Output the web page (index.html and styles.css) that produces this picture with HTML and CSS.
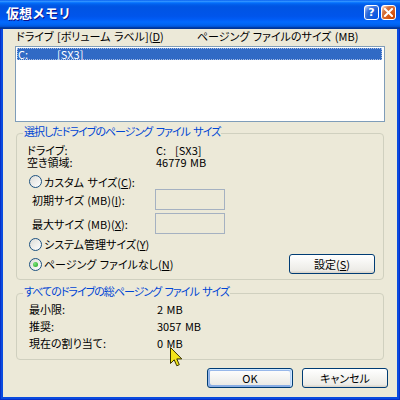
FILE: index.html
```html
<!DOCTYPE html>
<html lang="ja">
<head>
<meta charset="utf-8">
<title>仮想メモリ</title>
<link rel="stylesheet" href="styles.css">
</head>
<body>
<div class="window">
  <div class="titlebar">
    <span class="title">仮想メモリ</span>
    <span class="tbtn help">?</span>
    <span class="tbtn close"><svg width="9" height="9" viewBox="0 0 9 9"><path d="M1 1 L8 8 M8 1 L1 8" stroke="#fff" stroke-width="2" stroke-linecap="square"/></svg></span>
  </div>
  <div class="client">
    <div class="list-head"><span class="col1">ドライブ [ボリューム ラベル](<u>D</u>)</span><span>ページング ファイルのサイズ (MB)</span></div>
    <div class="listbox">
      <div class="item"><span class="c1">C:</span><span>[SX3]</span></div>
    </div>
    <div class="group g1">
      <div class="group-title">選択したドライブのページング ファイル サイズ</div>
      <div class="info"><span class="lbl">ドライブ:<br>空き領域:</span><span class="val">C:<span class="vol">[SX3]</span><br>46779 MB</span></div>
      <div class="radio-row custom"><span class="radio"></span><span>カスタム サイズ(<u>C</u>):</span></div>
      <div class="field"><span class="flbl">初期サイズ (MB)(<u>I</u>):</span><span class="edit"></span></div>
      <div class="field f2"><span class="flbl">最大サイズ (MB)(<u>X</u>):</span><span class="edit"></span></div>
      <div class="radio-row sys"><span class="radio"></span><span>システム管理サイズ(<u>Y</u>)</span></div>
      <div class="radio-row last"><span class="radio checked"></span><span>ページング ファイルなし(<u>N</u>)</span><button class="btn set">設定(<u>S</u>)</button></div>
    </div>
    <div class="group g2">
      <div class="group-title">すべてのドライブの総ページング ファイル サイズ</div>
      <div class="sum first"><span class="lbl">最小限:</span><span>2 MB</span></div>
      <div class="sum"><span class="lbl">推奨:</span><span>3057 MB</span></div>
      <div class="sum"><span class="lbl">現在の割り当て:</span><span>0 MB</span></div>
    </div>
    <div class="buttons"><button class="btn default">OK</button><button class="btn">キャンセル</button></div>
  </div>
  <svg class="cursor" width="13" height="20" viewBox="0 0 13 20"><path d="M0.5 0.5 V16.5 L4.2 12.8 L6.8 18.8 L9.3 17.7 L6.8 11.9 H11.8 Z" fill="#F4E41A" stroke="#3A3500" stroke-width="1" stroke-linejoin="miter"/></svg>
</div>
</body>
</html>
```

FILE: styles.css
```css
* { box-sizing: border-box; }
html, body { margin: 0; padding: 0; }
body {
  width: 400px;
  height: 400px;
  overflow: hidden;
  background: #0847E0;
  font-family: "Noto Sans CJK JP", "Liberation Sans", sans-serif;
  font-size: 11px;
  color: #000;
  font-feature-settings: "palt" 1;
  word-spacing: 1px;
}
.window {
  position: relative;
  width: 400px;
  height: 400px;
  display: flex;
  flex-direction: column;
  background: #0A4BDF;
  box-shadow: inset 1px 0 #0831C8, inset -1px 0 #0831C8, inset 0 -1px #0831C8;
}
.titlebar {
  height: 29px;
  display: flex;
  align-items: flex-start;
  padding: 5px 4px 0 6px;
  color: #fff;
  background: linear-gradient(180deg, #0058EE 0%, #3593FF 4%, #288EFF 6%, #127DFF 8%, #036FFC 10%, #0262EE 14%, #0057E5 20%, #0054E3 24%, #0055EB 56%, #005BF5 66%, #026AFE 76%, #0062EF 86%, #0052D6 92%, #0040AB 94%, #003092 100%);
}
.title {
  flex: 1;
  font-weight: bold;
  font-size: 13px;
  line-height: 16px;
  font-feature-settings: normal;
  text-shadow: 1px 1px #0F1089;
}
.tbtn {
  width: 15px;
  height: 15px;
  margin-left: 2px;
  border: 1px solid #fff;
  border-radius: 3px;
  display: flex;
  align-items: center;
  justify-content: center;
}
.help {
  background: radial-gradient(circle at 90% 90%, #0054E9 0%, #2263D5 55%, #4479E4 70%, #A3BBEC 90%, #fff 100%);
  font: bold 11px/1 "DejaVu Sans", sans-serif;
  color: #fff;
}
.close {
  background: radial-gradient(circle at 90% 90%, #CC4600 0%, #DC6527 55%, #CD7546 70%, #FFCCB2 90%, #fff 100%);
}
.client {
  flex: 1;
  margin: 0 3px 3px;
  background: #ECE9D8;
  padding: 0 9px 0 12px;
  display: flex;
  flex-direction: column;
}
.list-head {
  display: flex;
  height: 14px;
  line-height: 14px;
  padding-left: 1px;
  margin-bottom: 3px;
  white-space: nowrap;
}
.list-head .col1 { width: 181px; }
.listbox {
  height: 76px;
  margin-right: 3px;
  background: #fff;
  border: 1px solid #7F9DB9;
  padding: 1px 2px 0 1px;
}
.item {
  display: flex;
  height: 12px;
  line-height: 12px;
  padding-left: 1px;
  background: #316AC5;
  color: #fff;
  outline: 1px dotted #A9BDE2;
  outline-offset: -1px;
}
.item .c1 { width: 39px; }
.group {
  display: flex;
  flex-direction: column;
  margin: 0 4px 0 1px;
  border: 1px solid #D0D0BF;
  border-radius: 4px;
}
.g1 { margin-top: 11px; padding-bottom: 5px; }
.g2 { margin-top: 13px; padding-bottom: 8px; }
.group-title {
  align-self: flex-start;
  margin: -10px 0 0 6px;
  padding: 0 1px;
  line-height: 14px;
  letter-spacing: -1px;
  word-spacing: 2px;
  background: #ECE9D8;
  color: #0046D5;
  white-space: nowrap;
}
.info {
  display: flex;
  line-height: 12px;
  padding-left: 10px;
  margin-top: 6px;
}
.info .lbl { width: 129px; }
.info .vol { margin-left: 9px; }
.radio-row {
  display: flex;
  align-items: center;
  height: 15px;
  padding-left: 12px;
  white-space: nowrap;
}
.custom { margin-top: 6px; }
.sys { margin-top: 2px; height: 16px; }
.last { margin-top: 2px; height: 20px; }
.radio {
  flex: none;
  width: 13px;
  height: 13px;
  margin-right: 2px;
  border: 1px solid #1C5180;
  border-radius: 50%;
  background: linear-gradient(135deg, #DCDCD7, #fff);
  display: flex;
  align-items: center;
  justify-content: center;
}
.radio.checked::after {
  content: "";
  width: 5px;
  height: 5px;
  border-radius: 50%;
  background: radial-gradient(circle at 35% 35%, #7BE47A, #21A121);
}
.field {
  display: flex;
  align-items: center;
  height: 21px;
  padding-left: 15px;
  white-space: nowrap;
}
.f2 { margin-top: 3px; }
.field .flbl { width: 123px; }
.edit {
  width: 70px;
  height: 21px;
  border: 1px solid #A5B1C1;
}
.sum {
  display: flex;
  align-items: center;
  height: 17px;
  padding-left: 12px;
}
.sum.first { margin-top: 2px; }
.sum .lbl { width: 128px; }
.btn {
  width: 86px;
  height: 20px;
  padding: 0;
  font: inherit;
  line-height: 18px;
  color: #000;
  border: 1px solid #003C74;
  border-radius: 3px;
  background: linear-gradient(180deg, #fff, #ECEBE6 86%, #D6D0C5);
}
.btn.set { margin-left: auto; margin-right: 8px; }
.btn.default {
  box-shadow: inset -1px 1px #CEE7FF, inset 1px 2px #98B8EA, inset -2px 2px #BCD4F6, inset 1px -1px #89ADE4, inset 2px -2px #89ADE4;
}
.buttons {
  display: flex;
  justify-content: flex-end;
  gap: 9px;
  margin-top: 8px;
}
.cursor {
  position: absolute;
  left: 170px;
  top: 347px;
}
```
